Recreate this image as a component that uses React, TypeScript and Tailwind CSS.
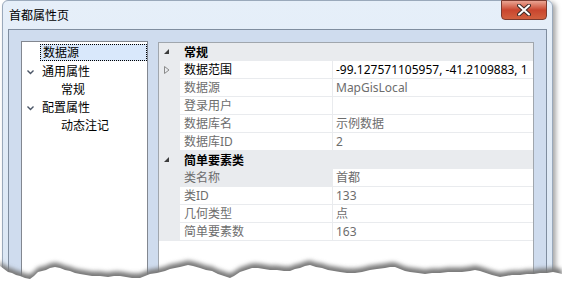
import React from "react";

const F = { fontFamily: '"Noto Sans", "Noto Sans CJK SC", sans-serif' };

type Row = { name: string; value: string; dark?: boolean; expand?: boolean; selected?: boolean };

const cat1: Row[] = [
  { name: "数据范围", value: "-99.127571105957, -41.2109883, 1", dark: true, expand: true },
  { name: "数据源", value: "MapGisLocal" },
  { name: "登录用户", value: "" },
  { name: "数据库名", value: "示例数据" },
  { name: "数据库ID", value: "2" },
];
const cat2: Row[] = [
  { name: "类名称", value: "首都", selected: true },
  { name: "类ID", value: "133" },
  { name: "几何类型", value: "点" },
  { name: "简单要素数", value: "163" },
];

function CatRow({ title }: { title: string }) {
  return (
    <div className="flex h-[18px] items-center bg-[#e9ebee]">
      <div className="w-[25px] flex items-center pl-[5px]">
        <svg width="6" height="6" viewBox="0 0 6 6">
          <polygon points="5,0 5,5 0,5" fill="#3c3c3c" />
        </svg>
      </div>
      <span className="text-[12px] font-bold text-black leading-[17px]">{title}</span>
    </div>
  );
}

function PRow({ r }: { r: Row }) {
  const tc = r.dark ? "text-black" : "text-[#6d6d6d]";
  return (
    <div className="flex h-[18px] bg-[#e9ebee]">
      <div className="w-[21px] h-[18px] flex items-center pl-[5px]">
        {r.expand && (
          <svg width="6" height="8" viewBox="0 0 6 8">
            <polygon points="0.5,0.5 5,4 0.5,7.5" fill="none" stroke="#8a8a8a" strokeWidth="1" />
          </svg>
        )}
      </div>
      <div
        className={`w-[152px] h-[17px] pl-[4px] text-[12px] leading-[17px] whitespace-nowrap overflow-hidden ${tc} ${
          r.selected ? "bg-[#e9ebee]" : "bg-white"
        }`}
      >
        {r.name}
      </div>
      <div className="w-px h-[17px]" />
      <div className={`w-[200px] h-[17px] bg-white pl-[3px] text-[12px] leading-[17px] whitespace-nowrap overflow-hidden ${tc}`}>
        {r.value}
      </div>
    </div>
  );
}

function Chevron() {
  return (
    <svg width="7" height="5" viewBox="0 0 7 5" className="mr-[6px]">
      <polyline points="0.5,0.5 3.5,3.5 6.5,0.5" fill="none" stroke="#4a5566" strokeWidth="1.4" />
    </svg>
  );
}

export default function App() {
  const tear =
    "M0,260 L4,263 L8,266 L12,267 L16,269 L20,270 L25,272 L30,273 L34,270 L38,266 L42,265 L46,264 L50,262 L55,261 L60,262 L65,264 L70,265 L75,267 L80,268 L86,269 L92,270 L100,270 L108,271 L114,270 L120,270 L126,271 L132,272 L140,272 L145,270 L150,268 L157,267 L165,265 L170,263 L175,262 L180,261 L184,260 L188,259 L193,260 L200,262 L206,264 L212,265 L218,268 L224,270 L230,272 L234,270 L240,266 L246,264 L252,262 L258,262 L264,263 L270,264 L277,264 L284,265 L290,265 L295,263 L300,262 L305,260 L310,259 L316,261 L322,262 L328,264 L334,265 L340,266 L347,267 L355,267 L362,266 L370,264 L377,263 L385,262 L390,261 L395,261 L400,263 L405,265 L410,266 L418,267 L425,268 L432,267 L440,267 L448,266 L455,266 L462,266 L470,265 L475,264 L480,265 L486,267 L492,269 L500,271 L506,270 L512,269 L520,269 L527,268 L534,268 L540,267 L547,267 L553,266 L558,267 L562,268 L562,300 L0,300 Z";
  return (
    <div className="relative w-[562px] h-[289px] overflow-hidden bg-white" style={F}>
      <div className="pl-[2px]">
        <div className="relative w-[551px] h-[300px] rounded-t-[6px] border border-[#9aa9bb] bg-gradient-to-b from-[#e6eff9] to-[#dae6f4] shadow-[3px_2px_5px_rgba(0,0,0,0.35)] px-[5px] pt-[28px]">
          <div className="absolute left-[6px] top-[6px] text-[12px] leading-[17px] text-black">首都属性页</div>
          <div className="absolute right-[5px] top-[-1px] w-[46px] h-[20px] rounded-b-[4px] border border-[#7b3a2f] bg-gradient-to-b from-[#e9a493] via-[#c9452e] to-[#d2603f] flex items-center justify-center">
            <svg width="14" height="12" viewBox="0 0 14 12">
              <path d="M2,1.5 L12,10.5 M12,1.5 L2,10.5" stroke="#3b2a26" strokeWidth="4" strokeLinecap="round" />
              <path d="M2,1.5 L12,10.5 M12,1.5 L2,10.5" stroke="#ffffff" strokeWidth="2" strokeLinecap="round" />
            </svg>
          </div>
          <div className="h-[270px] border border-[#7f8d9f] bg-[#cfdcee] flex items-start pl-[12px]">
            <div className="mt-[11px] w-[127px] h-[260px] border border-[#828790] bg-white pt-[1px]">
              <div className="flex h-[18px] items-center pl-[18px]">
                <div className="flex-1 h-[17px] border border-dotted border-black bg-[#d9e8fb] pl-[2px] text-[12px] leading-[15px] text-black">
                  数据源
                </div>
              </div>
              <div className="h-[2px]" />
              <div className="flex h-[18px] items-center pl-[5px] text-[12px] text-black">
                <Chevron />
                <span className="pl-[2px]">通用属性</span>
              </div>
              <div className="flex h-[18px] items-center pl-[39px] text-[12px] text-black">常规</div>
              <div className="flex h-[18px] items-center pl-[5px] text-[12px] text-black">
                <Chevron />
                <span className="pl-[2px]">配置属性</span>
              </div>
              <div className="flex h-[18px] items-center pl-[39px] text-[12px] text-black">动态注记</div>
            </div>
            <div className="mt-[12px] ml-[10px] w-[376px] h-[260px] border border-[#a0a6ad] bg-white overflow-hidden">
              <CatRow title="常规" />
              {cat1.map((r) => (
                <PRow key={r.name} r={r} />
              ))}
              <CatRow title="简单要素类" />
              {cat2.map((r) => (
                <PRow key={r.name} r={r} />
              ))}
            </div>
          </div>
        </div>
      </div>
      <svg className="absolute left-0 top-0" width="562" height="289" viewBox="0 0 562 289">
        <defs>
          <filter id="blur" x="-5%" y="-50%" width="110%" height="200%">
            <feGaussianBlur stdDeviation="2" />
          </filter>
        </defs>
        <path d={tear} fill="#7a7a7a" filter="url(#blur)" transform="translate(0,1.5)" />
        <path d={tear} fill="#ffffff" transform="translate(0,6)" />
      </svg>
    </div>
  );
}
